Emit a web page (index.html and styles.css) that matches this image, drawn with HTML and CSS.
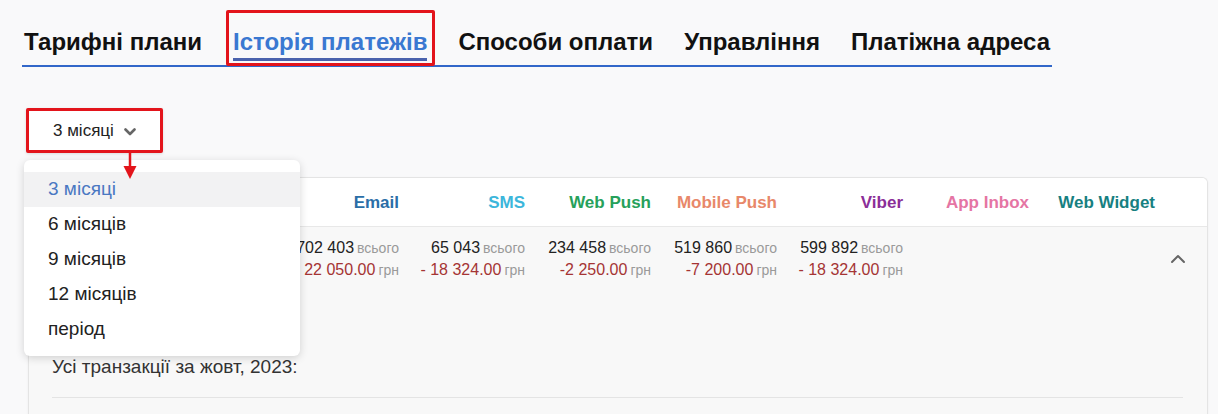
FILE: index.html
```html
<!DOCTYPE html>
<html lang="uk">
<head>
<meta charset="utf-8">
<title>Історія платежів</title>
<link rel="stylesheet" href="styles.css">
</head>
<body>
<nav class="tabs">
  <a class="tab">Тарифні плани</a>
  <a class="tab active"><span class="tab-label">Історія платежів</span><span class="mark mark-tab"></span></a>
  <a class="tab">Способи оплати</a>
  <a class="tab">Управління</a>
  <a class="tab">Платіжна адреса</a>
</nav>

<div class="filter">
  <button class="select">
    <span>3 місяці</span>
    <svg class="chev" width="12" height="8" viewBox="0 0 12 8"><path d="M1.5 1.5 L6 6 L10.5 1.5" fill="none" stroke="#666" stroke-width="2.6" stroke-linecap="round" stroke-linejoin="round"/></svg>
  </button>
  <svg class="pointer" width="16" height="28" viewBox="0 0 16 28"><path d="M8 0 V16" stroke="#e3141b" stroke-width="2.5"/><path d="M1.5 13 L14.5 13 L8 26 Z" fill="#e3141b"/></svg>
  <ul class="menu">
    <li class="opt selected">3 місяці</li>
    <li class="opt">6 місяців</li>
    <li class="opt">9 місяців</li>
    <li class="opt">12 місяців</li>
    <li class="opt">період</li>
  </ul>
</div>

<section class="card">
  <div class="head">
    <div class="lead"></div>
    <div class="col c-email">Email</div>
    <div class="col c-sms">SMS</div>
    <div class="col c-wpush">Web Push</div>
    <div class="col c-mpush">Mobile Push</div>
    <div class="col c-viber">Viber</div>
    <div class="col c-inbox">App Inbox</div>
    <div class="col c-widget">Web Widget</div>
  </div>
  <div class="row">
    <div class="lead"></div>
    <div class="col"><div class="num">702 403<small>всього</small></div><div class="sum">- 22 050.00<small>грн</small></div></div>
    <div class="col"><div class="num">65 043<small>всього</small></div><div class="sum">- 18 324.00<small>грн</small></div></div>
    <div class="col"><div class="num">234 458<small>всього</small></div><div class="sum">-2 250.00<small>грн</small></div></div>
    <div class="col"><div class="num">519 860<small>всього</small></div><div class="sum">-7 200.00<small>грн</small></div></div>
    <div class="col"><div class="num">599 892<small>всього</small></div><div class="sum">- 18 324.00<small>грн</small></div></div>
    <div class="col"></div>
    <div class="col"></div>
    <div class="toggle">
      <svg width="16" height="10" viewBox="0 0 16 10"><path d="M2 8 L8 2 L14 8" fill="none" stroke="#666" stroke-width="2" stroke-linecap="round" stroke-linejoin="round"/></svg>
    </div>
  </div>
  <div class="details">
    <p class="caption">Усі транзакції за жовт, 2023:</p>
    <div class="rule"></div>
  </div>
</section>
</body>
</html>
```

FILE: styles.css
```css
* { box-sizing: border-box; }

html, body {
  margin: 0;
  padding: 0;
  height: 100%;
  overflow: hidden;
}

body {
  background: #f9f9fa;
  font-family: "Liberation Sans", Arial, sans-serif;
  color: #222;
}

/* Tabs */
.tabs {
  display: flex;
  gap: 31px;
  margin-left: 22px;
  width: 1030px;
  padding-left: 2px;
  border-bottom: 2px solid #3267c9;
}

.tab {
  position: relative;
  display: block;
  padding: 29px 0 10px;
  font-size: 24px;
  line-height: 26px;
  font-weight: bold;
  color: #111;
  text-decoration: none;
  white-space: nowrap;
}

.tab.active { color: #3a78d1; }

.tab-label {
  display: inline-block;
  border-bottom: 3px solid #4a62ad;
  padding-bottom: 3px;
  margin-bottom: -6px;
}

.mark {
  position: absolute;
  border: 3px solid #e3141b;
  pointer-events: none;
}

.mark-tab {
  left: -7px;
  right: -8px;
  top: 10px;
  bottom: -1px;
  border-radius: 2px;
}

/* Filter */
.filter {
  position: relative;
  margin: 41px 0 0 26px;
  height: 45px;
}

.select {
  display: flex;
  align-items: center;
  gap: 10px;
  width: 137px;
  height: 45px;
  padding: 0 0 0 24px;
  background: #fff;
  border: 3px solid #e3141b;
  border-radius: 2px;
  box-shadow: 0 1px 3px rgba(0,0,0,0.12);
  font-family: inherit;
  font-size: 17px;
  color: #222;
  cursor: pointer;
}

.chev { margin-top: 2px; }

.pointer {
  position: absolute;
  left: 96px;
  top: 45px;
  z-index: 3;
}

.menu {
  position: absolute;
  left: -2px;
  top: 52px;
  z-index: 2;
  width: 276px;
  margin: 0;
  padding: 12px 0 9px;
  list-style: none;
  background: #fff;
  border-radius: 6px;
  box-shadow: 0 2px 8px rgba(0,0,0,0.16);
}

.opt {
  height: 35px;
  line-height: 34px;
  padding-left: 24px;
  font-size: 19px;
  color: #222;
}

.opt.selected {
  background: #f2f2f3;
  color: #4a78c2;
}

/* Card */
.card {
  margin: 24px 0 0 28px;
  width: 1180px;
  height: 237px;
  background: #f8f8f8;
  border: 1px solid #e4e4e4;
  border-bottom: 0;
  border-radius: 6px 6px 0 0;
  box-shadow: 0 1px 3px rgba(0,0,0,0.05);
  overflow: hidden;
}

.head, .row {
  display: flex;
}

.head {
  height: 49px;
  align-items: center;
  background: #fff;
  border-bottom: 1px solid #e8e8e8;
}

.lead { width: 244px; flex: none; }

.col {
  width: 126px;
  flex: none;
  text-align: right;
  white-space: nowrap;
}

.head .col {
  font-size: 17px;
  font-weight: bold;
  padding-top: 1px;
}

.c-email  { color: #2b6ea7; }
.c-sms    { color: #3cb6db; }
.c-wpush  { color: #27a15b; }
.c-mpush  { color: #e8886a; }
.c-viber  { color: #8b2e98; }
.c-inbox  { color: #e575a4; }
.c-widget { color: #178081; }

.row {
  padding: 10px 0 10px;
}

.num, .sum {
  font-size: 16px;
  line-height: 22px;
}

.num { color: #222; }
.sum { color: #a53434; }

.col small {
  font-size: 14px;
  color: #9a9a9a;
  margin-left: 3px;
}

.toggle {
  flex: 1;
  display: flex;
  justify-content: flex-end;
  padding: 17px 21px 0 0;
}

.details {
  padding: 65px 24px 0 23px;
}

.caption {
  margin: 0;
  font-size: 19px;
  line-height: 22px;
  color: #333;
}

.rule {
  margin-top: 19px;
  height: 1px;
  background: #e4e4e4;
}
```
